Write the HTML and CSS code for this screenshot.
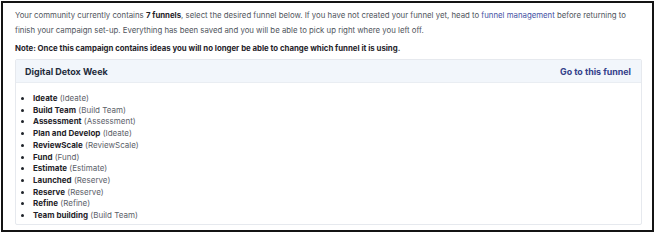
FILE: index.html
```html
<!DOCTYPE html>
<html>
<head>
<meta charset="utf-8">
<link rel="stylesheet" href="styles.css">
</head>
<body>
<div class="frame">
  <p class="intro">Your community currently contains <strong>7 funnels</strong>, select the desired funnel below. If you have not created your funnel yet, head to <a class="link" href="#">funnel management</a> before returning to finish your campaign set-up. Everything has been saved and you will be able to pick up right where you left off.</p>
  <p class="note">Note: Once this campaign contains ideas you will no longer be able to change which funnel it is using.</p>
  <div class="card">
    <div class="card-head">
      <span class="card-title">Digital Detox Week</span>
      <a class="card-link" href="#">Go to this funnel</a>
    </div>
    <ul class="stages">
      <li><b>Ideate</b> <span>(Ideate)</span></li>
      <li><b>Build Team</b> <span>(Build Team)</span></li>
      <li><b>Assessment</b> <span>(Assessment)</span></li>
      <li><b>Plan and Develop</b> <span>(Ideate)</span></li>
      <li><b>ReviewScale</b> <span>(ReviewScale)</span></li>
      <li><b>Fund</b> <span>(Fund)</span></li>
      <li><b>Estimate</b> <span>(Estimate)</span></li>
      <li><b>Launched</b> <span>(Reserve)</span></li>
      <li><b>Reserve</b> <span>(Reserve)</span></li>
      <li><b>Refine</b> <span>(Refine)</span></li>
      <li><b>Team building</b> <span>(Build Team)</span></li>
    </ul>
  </div>
</div>
</body>
</html>
```
FILE: styles.css
```css
html, body {
  margin: 0;
  padding: 0;
  background: #ffffff;
}
body {
  padding: 1px;
  font-family: Inter, "Noto Sans", sans-serif;
  color: #4a4f57;
}
.frame {
  box-sizing: border-box;
  width: 653px;
  height: 231px;
  border: 2px solid #141414;
  padding: 5px 4px 0 12px;
}
.intro {
  margin: 0;
  font-size: 7.8px;
  line-height: 15px;
  color: #50555d;
}
.intro strong {
  color: #1f2329;
  font-weight: 700;
}
.link {
  color: #3f51a3;
  text-decoration: none;
}
.note {
  margin: 3px 0 0;
  font-size: 7.8px;
  line-height: 15px;
  font-weight: 700;
  color: #1f2329;
}
.card {
  margin: 3px 6px 0 0;
  border: 1px solid #e6e9ee;
  border-radius: 2px;
  height: 166px;
  box-sizing: border-box;
}
.card-head {
  display: flex;
  justify-content: space-between;
  align-items: center;
  height: 22px;
  padding: 0 10px 0 9px;
  background: #f2f6fb;
  border-bottom: 1px solid #e9edf2;
}
.card-title {
  font-size: 9px;
  font-weight: 700;
  color: #1e2b3c;
}
.card-link {
  font-size: 8.9px;
  font-weight: 700;
  color: #34418a;
  text-decoration: none;
}
.stages {
  margin: 10px 0 0;
  padding: 0 0 0 17px;
  font-size: 8px;
  line-height: 11.7px;
  color: #1f2329;
}
.stages li b {
  font-weight: 700;
}
.stages li span {
  color: #5c6169;
}
```
